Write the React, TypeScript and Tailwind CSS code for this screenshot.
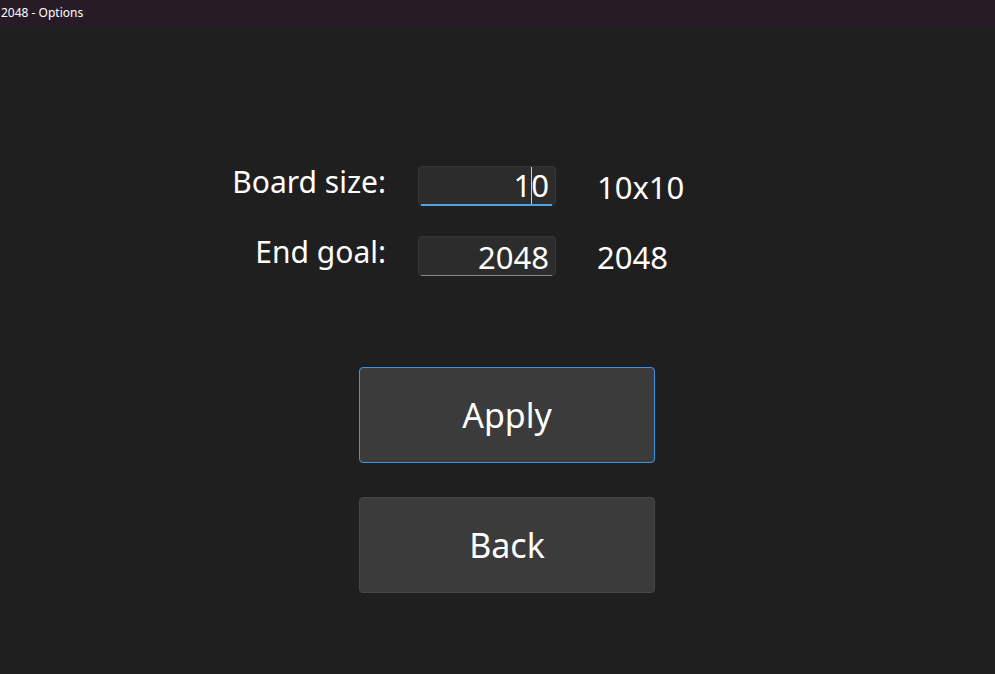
import React from 'react';

const font = { fontFamily: '"Noto Sans", "Open Sans", sans-serif' };

interface FieldRowProps {
  label: string;
  value: string;
  result: string;
  focused?: boolean;
}

function FieldRow({ label, value, result, focused }: FieldRowProps) {
  return (
    <div className="flex items-start h-[40px]">
      <div className="w-[200px] text-right text-[30px] leading-[34px] text-white pr-[1px] -mt-[1px]">{label}</div>
      <div className="ml-[31px] w-[138px] h-[40px] relative rounded-[4px] bg-[#2c2c2c] border border-[#373737] flex items-center justify-end pr-[6px]">
        <span className="text-[31px] leading-none text-white mt-[3px] relative">
          {focused ? (
            <>
              1<span className="inline-block w-[1px] h-[38px] bg-[#cfcfcf] align-middle -mt-[4px] mx-[-0.5px]" />0
            </>
          ) : (
            value
          )}
        </span>
        <div
          className={
            focused
              ? 'absolute left-[2px] right-[3px] -bottom-[1px] h-[2px] bg-[#4ca2e8]'
              : 'absolute left-[2px] right-[3px] -bottom-[1px] h-[1px] bg-[#8a8a8a]'
          }
        />
      </div>
      <div className="ml-[41px] text-[31px] leading-[40px] text-white mt-[1px]">{result}</div>
    </div>
  );
}

export default function App() {
  return (
    <div className="w-[995px] h-[674px] bg-[#1f1f1f] flex flex-col overflow-hidden" style={font}>
      <div className="h-[26px] bg-[#271c26] text-white text-[12px] leading-[26px] pl-[1px]">2048 - Options</div>
      <div className="flex flex-col pl-[187px] pt-[140px] gap-[30px]">
        <FieldRow label="Board size:" value="10" result="10x10" focused />
        <FieldRow label="End goal:" value="2048" result="2048" />
      </div>
      <div className="flex flex-col items-start pl-[359px] pt-[91px] gap-[34px]">
        <button className="w-[296px] h-[96px] rounded-[4px] bg-[#3b3b3b] border border-[#3f93df] text-white text-[34px]">
          Apply
        </button>
        <button className="w-[296px] h-[96px] rounded-[4px] bg-[#3b3b3b] border border-[#474747] text-white text-[34px]">
          Back
        </button>
      </div>
    </div>
  );
}
